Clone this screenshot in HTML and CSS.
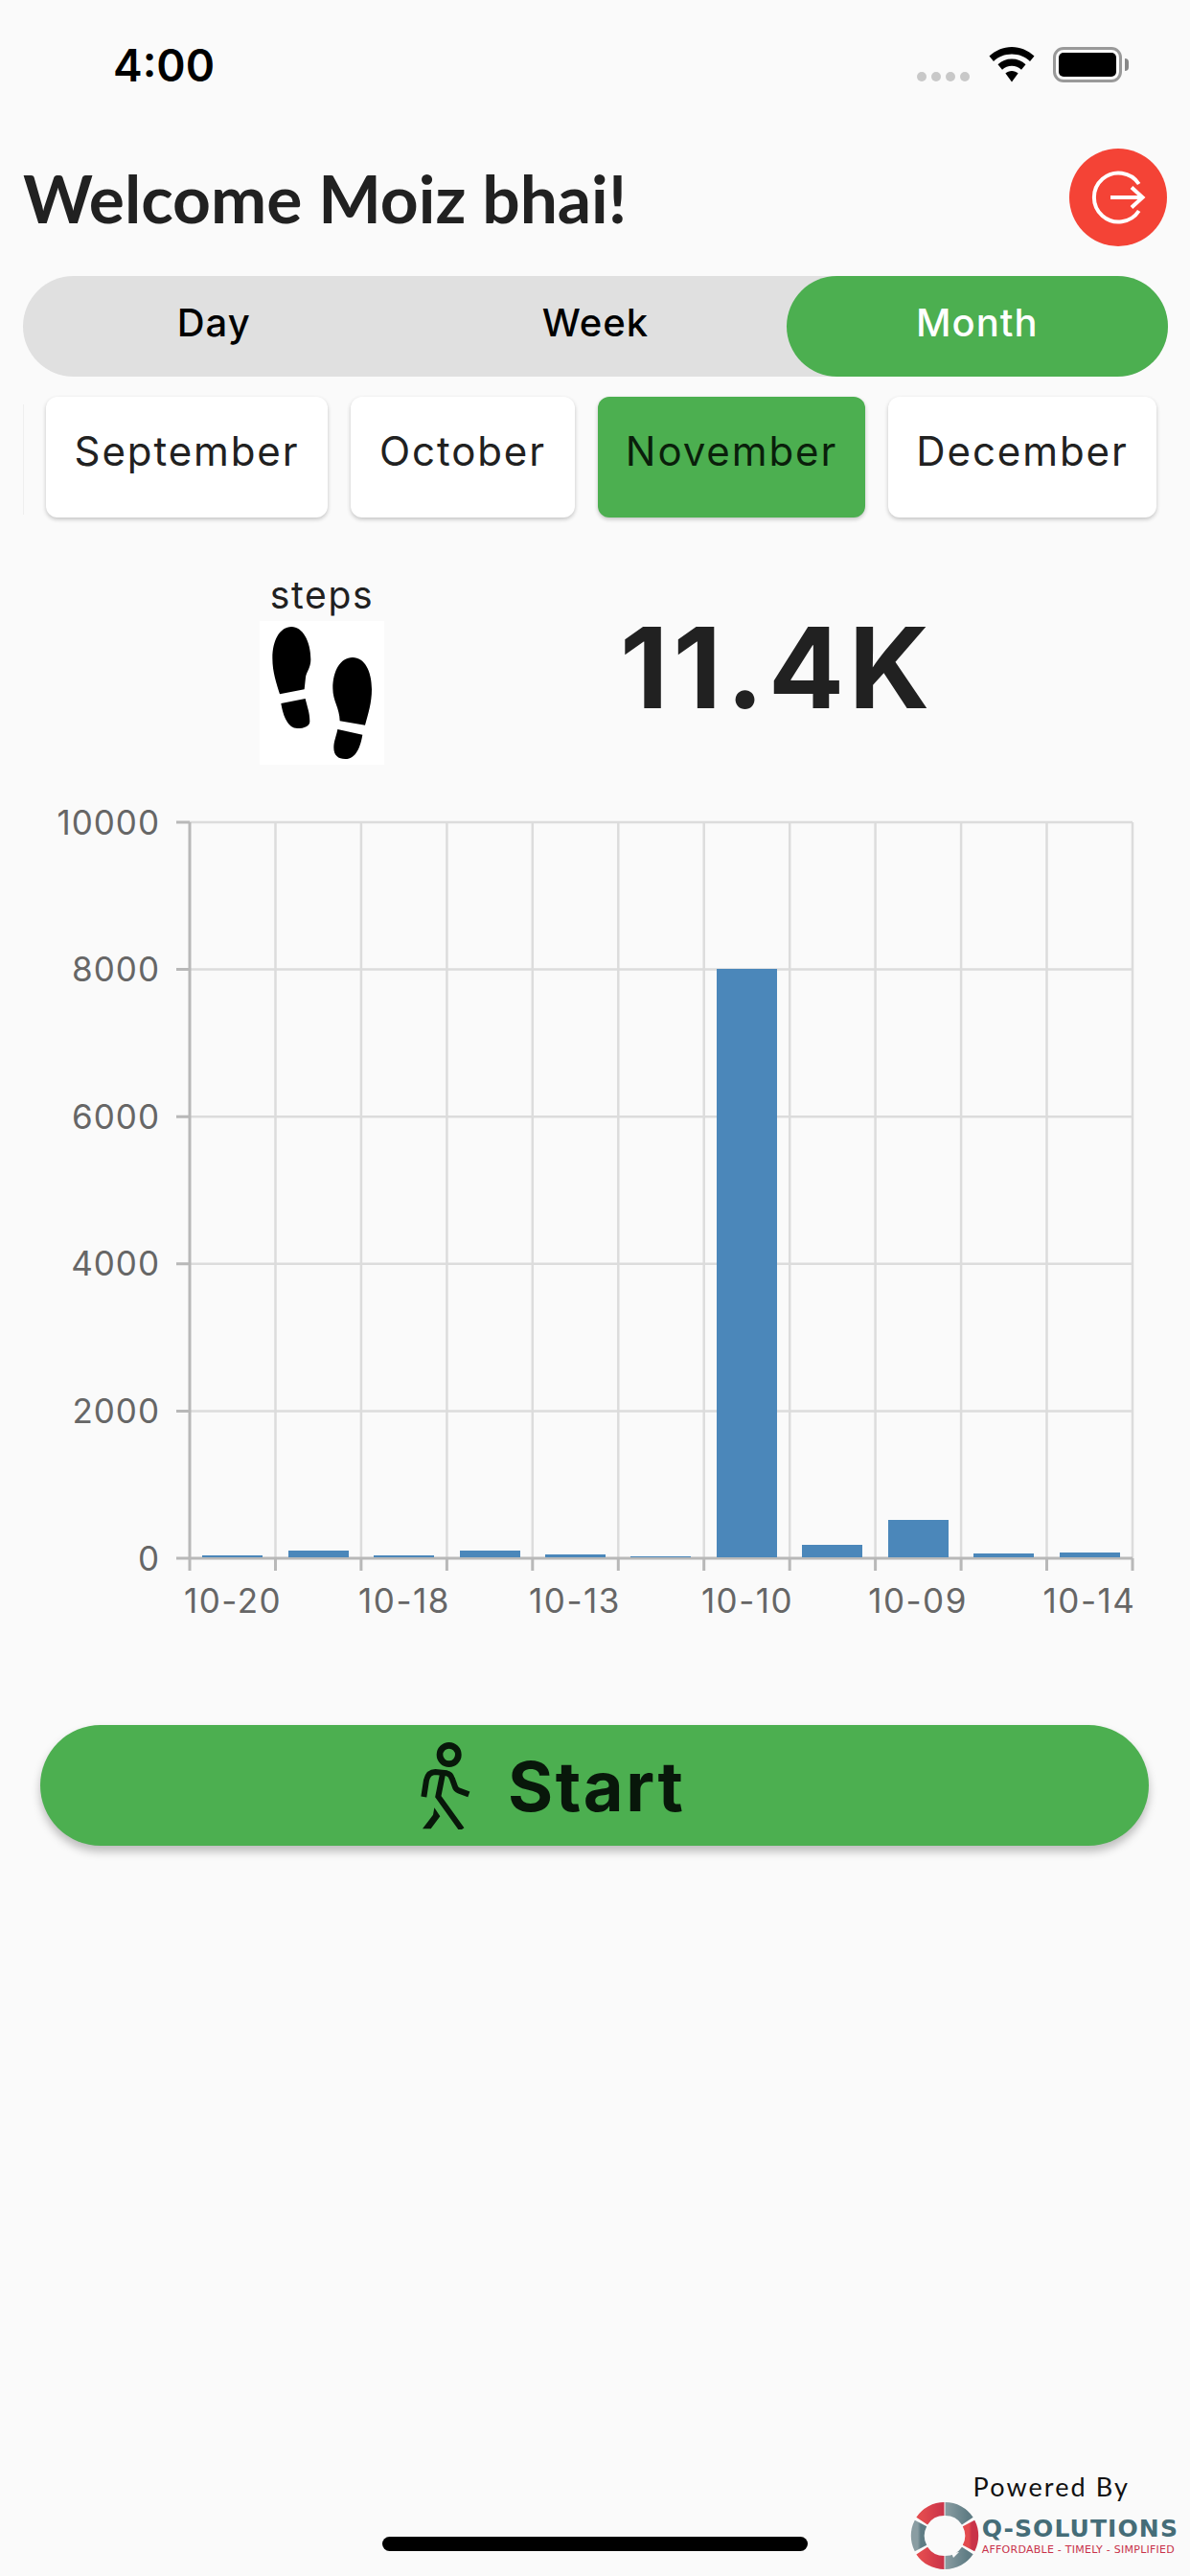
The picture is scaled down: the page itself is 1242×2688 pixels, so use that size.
FILE: index.html
```html
<!DOCTYPE html>
<html lang="en">
<head>
    <meta charset="UTF-8">
    <meta name="viewport" content="width=device-width, initial-scale=1.0">
    <title>Step Counter</title>
    <link rel="stylesheet" href="styles.css">
</head>
<body>
<div class="statusbar">
    <div class="time">4:00</div>
    <div class="status-icons">
        <div class="signal"><span></span><span></span><span></span><span></span></div>
        <svg class="wifi" width="48" height="37" viewBox="0 0 48 37">
            <path d="M24 0C33 0 41 3.600 47.500 9.500L43 15C38 10.200 31.500 7.500 24 7.500C16.500 7.500 10 10.200 5 15L.5 9.500C7 3.600 15 0 24 0Z"/>
            <path d="M24 12.500C29.600 12.500 34.600 14.500 38.500 18.300L34 23.800C31.200 21.100 27.800 19.700 24 19.700C20.200 19.700 16.800 21.100 14 23.800L9.500 18.300C13.400 14.500 18.400 12.500 24 12.500Z"/>
            <path d="M24 25C26.500 25 28.800 25.900 30.600 27.500L24 36.500L17.400 27.500C19.200 25.900 21.500 25 24 25Z"/>
        </svg>
        <div class="battery"><div class="battery-level"></div></div>
        <div class="battery-nub"></div>
    </div>
</div>

<div class="header">
    <h1>Welcome Moiz bhai!</h1>
    <button class="logout-btn">
        <svg width="60" height="60" viewBox="-2 -2 60 60" fill="none" stroke="#fff" stroke-width="4">
            <path d="M49.700 14A25.500 25.500 0 1 0 49.700 42"/>
            <path d="M20 28H53"/>
            <path d="M42 17.500L53.500 28L42 38.500"/>
        </svg>
    </button>
</div>

<div class="toggle">
    <div class="toggle-item">Day</div>
    <div class="toggle-item">Week</div>
    <div class="toggle-item active">Month</div>
</div>

<div class="months">
    <div class="month-prev"></div>
    <div class="month-card sep">September</div>
    <div class="month-card oct">October</div>
    <div class="month-card nov active">November</div>
    <div class="month-card dec">December</div>
</div>

<div class="summary">
    <div class="steps-box">
        <div class="steps-label">steps</div>
        <svg class="steps-img" width="130" height="150" viewBox="122 174 390 450">
            <rect x="122" y="174" width="390" height="450" fill="#fff"/>
            <path d="M222 192C255 192 282 235 282 295C282 320 268 335 266 350L262 388L185 403C175 370 162 335 162 290C162 235 185 192 222 192Z"/>
            <path d="M189 432L265 417C270 440 279 460 279 488C279 503 262 510 240 510C212 510 196 475 189 432Z"/>
            <path d="M413 288C450 288 473 330 473 388C473 430 462 465 452 500L373 487C372 445 351 425 351 385C351 330 375 288 413 288Z"/>
            <path d="M366 513L444 530C438 565 425 606 390 606C368 606 354 595 354 570C354 550 362 535 366 513Z"/>
        </svg>
    </div>
    <div class="steps-total">11.4K</div>
</div>

<div class="chart">
    <svg width="1242" height="874" viewBox="0 -14 1242 874">
        <g class="grid">
            <path d="M198 14H1182M198 167.600H1182M198 321.200H1182M198 474.800H1182M198 628.400H1182"/>
            <path d="M287.500 14V782M376.900 14V782M466.400 14V782M555.800 14V782M645.300 14V782M734.700 14V782M824.200 14V782M913.600 14V782M1003.100 14V782M1092.500 14V782M1182 14V782"/>
        </g>
        <g class="axis">
            <path d="M198 14V795"/>
            <path d="M184 782H1182"/>
            <path d="M184 14H198M184 167.600H198M184 321.200H198M184 474.800H198M184 628.400H198"/>
            <path d="M287.500 782V795M376.900 782V795M466.400 782V795M555.800 782V795M645.300 782V795M734.700 782V795M824.200 782V795M913.600 782V795M1003.100 782V795M1092.500 782V795M1182 782V795"/>
        </g>
        <g class="bars">
            <rect x="211" y="779" width="63" height="2"/>
            <rect x="301" y="774" width="63" height="7"/>
            <rect x="390" y="779" width="63" height="2"/>
            <rect x="480" y="774" width="63" height="7"/>
            <rect x="569" y="778" width="63" height="3"/>
            <rect x="658" y="780" width="63" height="1"/>
            <rect x="748" y="167" width="63" height="614"/>
            <rect x="837" y="768" width="63" height="13"/>
            <rect x="927" y="742" width="63" height="39"/>
            <rect x="1016" y="777" width="63" height="4"/>
            <rect x="1106" y="776" width="63" height="5"/>
        </g>
        <g class="y-labels">
            <text x="167" y="27">10000</text>
            <text x="167" y="180">8000</text>
            <text x="167" y="334">6000</text>
            <text x="167" y="487">4000</text>
            <text x="167" y="641">2000</text>
            <text x="167" y="795">0</text>
        </g>
        <g class="x-labels">
            <text x="243" y="839">10-20</text>
            <text x="422" y="839">10-18</text>
            <text x="600" y="839">10-13</text>
            <text x="780" y="839">10-10</text>
            <text x="958" y="839">10-09</text>
            <text x="1137" y="839">10-14</text>
        </g>
    </svg>
</div>

<button class="start-btn">
    <svg width="55" height="92" viewBox="170 110 165 276">
        <circle cx="265" cy="152" r="29" fill="none" stroke="#08170a" stroke-width="20"/>
        <g fill="none" stroke="#08170a" stroke-width="18">
            <path d="M186 284L194 232C198 215 208 206 222 206L258 210C268 212 272 218 275 228L283 250C285 258 290 262 297 265L327 276"/>
            <path d="M245 212L231 283L305 386"/>
        </g>
        <path d="M219 318L237 345L208 384L182 384L215 340Z" fill="#08170a"/>
    </svg>
    <span>Start</span>
</button>

<div class="footer">
    <div class="powered">Powered By</div>
    <div class="brand">
        <svg class="brand-ring" width="74" height="74" viewBox="0 0 74 74">
            <defs>
                <linearGradient id="red" x1="0" y1="0" x2="1" y2="0">
                    <stop offset="0" stop-color="#e34a4e"/>
                    <stop offset="1" stop-color="#c93349"/>
                </linearGradient>
                <linearGradient id="gray" x1="0" y1="0" x2="1" y2="0">
                    <stop offset="0" stop-color="#8a9da2"/>
                    <stop offset="1" stop-color="#5f7c84"/>
                </linearGradient>
            </defs>
            <g fill="none" stroke-width="14">
                <path d="M37.500 9A28 28 0 0 1 60.800 21.500" stroke="url(#gray)"/>
                <path d="M62 24A28 28 0 0 1 62 50" stroke="url(#red)"/>
                <path d="M60.800 52.500A28 28 0 0 1 37.500 65" stroke="url(#gray)"/>
                <path d="M36.500 65A28 28 0 0 1 13.200 52.500" stroke="url(#red)"/>
                <path d="M12 50A28 28 0 0 1 12 24" stroke="url(#gray)"/>
                <path d="M13.200 21.500A28 28 0 0 1 36.500 9" stroke="url(#red)"/>
            </g>
            <path d="M44 55L46 60L52 54Z" fill="#fafafa"/>
        </svg>
        <div class="brand-text">
            <div class="brand-name">Q-SOLUTIONS</div>
            <div class="brand-tag">AFFORDABLE - TIMELY - SIMPLIFIED</div>
        </div>
    </div>
</div>

<div class="home-indicator"></div>
</body>
</html>
```
FILE: styles.css
```css
* {
    box-sizing: border-box;
}

html, body {
    margin: 0;
    padding: 0;
}

body {
    position: relative;
    width: 1242px;
    height: 2688px;
    overflow: hidden;
    background-color: #fafafa;
    font-family: Inter, "Noto Sans", sans-serif;
    color: #212121;
}

.statusbar {
    display: flex;
    justify-content: space-between;
    height: 136px;
    padding: 40px 0 0 118px;
}

.time {
    font-size: 46px;
    font-weight: 600;
    line-height: 56px;
    color: #000;
}

.status-icons {
    display: flex;
    align-items: flex-start;
    padding: 9px 64px 0 0;
}

.signal {
    display: flex;
    gap: 5px;
    margin: 26px 20px 0 0;
}

.signal span {
    width: 10px;
    height: 10px;
    border-radius: 50%;
    background-color: #c8c8c8;
}

.wifi {
    margin-right: 19px;
}

.battery {
    width: 72px;
    height: 37px;
    padding: 3px;
    border: 3px solid #999;
    border-radius: 11px;
}

.battery-level {
    height: 25px;
    border-radius: 5px;
    background-color: #000;
}

.battery-nub {
    width: 4px;
    height: 13px;
    margin: 12px 0 0 3px;
    border-radius: 0 4px 4px 0;
    background-color: #888;
}

.header {
    display: flex;
    justify-content: space-between;
    align-items: center;
    height: 140px;
    padding: 0 24px;
}

.header h1 {
    margin: 0;
    font-family: Lato, sans-serif;
    font-size: 69.500px;
    font-weight: 700;
    color: #212121;
}

.logout-btn {
    display: flex;
    align-items: center;
    justify-content: center;
    width: 102px;
    height: 102px;
    padding: 0;
    border: none;
    border-radius: 50%;
    background-color: #f44336;
}

.toggle {
    display: flex;
    height: 105px;
    margin: 12px 23px 0 24px;
    border-radius: 53px;
    background-color: #e0e0e0;
}

.toggle-item {
    flex: 1;
    display: flex;
    align-items: center;
    justify-content: center;
    padding-bottom: 8px;
    border-radius: 53px;
    font-size: 40px;
    font-weight: 450;
    letter-spacing: 1px;
    color: #000;
}

.toggle-item.active {
    background-color: #4caf50;
    color: #fff;
}

.months {
    display: flex;
    gap: 24px;
    height: 126px;
    margin-top: 21px;
    padding-left: 24px;
}

.month-card {
    display: flex;
    align-items: center;
    justify-content: center;
    height: 126px;
    padding-bottom: 14px;
    border-radius: 12px;
    background-color: #fff;
    box-shadow: 0 2px 4px rgba(0, 0, 0, 0.22);
    font-size: 42px;
    font-weight: 380;
    letter-spacing: 1.900px;
}

.month-prev {
    width: 1px;
    height: 115px;
    margin: 8px -1px 0 0;
    background-color: #eeeeee;
}

.sep { width: 294px; }
.oct { width: 234px; }
.nov { width: 279px; }
.dec { width: 280px; }

.month-card.active {
    background-color: #4caf50;
    color: #0a1f0b;
}

.summary {
    display: flex;
    height: 290px;
}

.steps-box {
    display: flex;
    flex-direction: column;
    align-items: center;
    width: 130px;
    margin: 57px 0 0 271px;
}

.steps-label {
    height: 51px;
    font-size: 39px;
    font-weight: 380;
    line-height: 48px;
    letter-spacing: 1.700px;
}

.steps-img {
    display: block;
    flex-shrink: 0;
}

.steps-total {
    margin: 89px 0 0 246px;
    font-size: 117px;
    font-weight: 700;
    line-height: 136px;
    letter-spacing: 5px;
}

.chart {
    height: 970px;
}

.chart svg {
    display: block;
}

.grid path {
    fill: none;
    stroke: #dcdcdc;
    stroke-width: 2.500;
}

.bars rect {
    fill: #4b87ba;
}

.axis path {
    fill: none;
    stroke: #b8b8b8;
    stroke-width: 3;
}

.y-labels text,
.x-labels text {
    font-family: Inter, sans-serif;
    font-size: 35px;
    font-weight: 380;
    letter-spacing: 1.500px;
    fill: #666;
}

.y-labels text {
    text-anchor: end;
    letter-spacing: 1px;
}

.x-labels text {
    text-anchor: middle;
}

.start-btn {
    display: flex;
    align-items: center;
    justify-content: flex-start;
    gap: 38px;
    width: 1157px;
    height: 126px;
    margin-left: 42px;
    padding: 0 0 0 395px;
    border: none;
    border-radius: 63px;
    background-color: #4caf50;
    box-shadow: 0 6px 10px rgba(0, 0, 0, 0.25);
    font-family: Inter, sans-serif;
    font-size: 72px;
    font-weight: 700;
    letter-spacing: 2.500px;
    color: #08170a;
}

.footer {
    position: absolute;
    right: 12px;
    bottom: 5px;
    display: flex;
    flex-direction: column;
    align-items: center;
}

.powered {
    margin-left: 16px;
    font-family: Lato, sans-serif;
    font-size: 27px;
    line-height: 28px;
    letter-spacing: 2.100px;
    color: #111;
}

.brand {
    display: flex;
    align-items: center;
    gap: 2px;
}

.brand-name {
    font-family: "DejaVu Sans", sans-serif;
    font-size: 25px;
    font-weight: 700;
    line-height: 26px;
    letter-spacing: 1.100px;
    color: #456d78;
}

.brand-tag {
    margin-top: 3px;
    font-family: "DejaVu Sans", sans-serif;
    font-size: 11px;
    line-height: 12px;
    letter-spacing: 0.250px;
    color: #c8324a;
}

.home-indicator {
    position: absolute;
    left: 399px;
    bottom: 26px;
    width: 444px;
    height: 15px;
    border-radius: 8px;
    background-color: #000;
}
```
